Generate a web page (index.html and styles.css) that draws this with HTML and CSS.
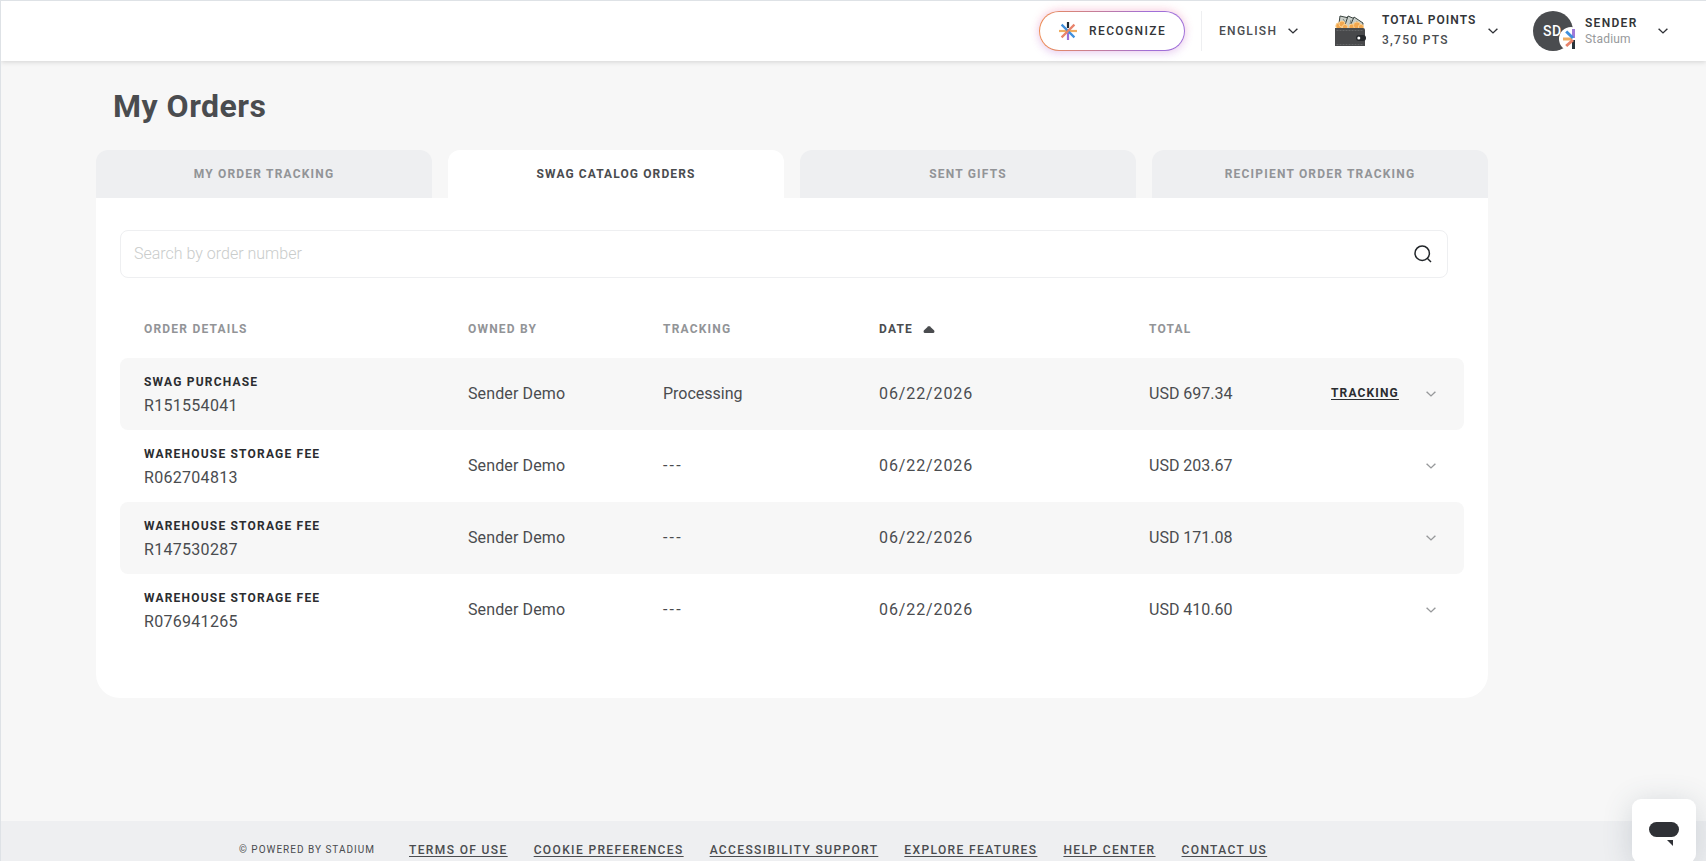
FILE: index.html
```html
<!DOCTYPE html>
<html lang="en">

<head>
    <meta charset="UTF-8">
    <meta name="viewport" content="width=device-width, initial-scale=1.0">
    <title>My Orders</title>
    <link rel="stylesheet" href="styles.css">
</head>

<body>
    <svg class="defs" width="0" height="0">
        <symbol id="chevron" viewBox="0 0 10 6">
            <path d="M0.6 0.7 L5 4.9 L9.4 0.7" fill="none" stroke="currentColor" stroke-width="1.4" />
        </symbol>
        <symbol id="spark" viewBox="0 0 18 18">
            <g fill="none" stroke-width="2.2">
                <path d="M0 9H18" stroke="#f0ad62" />
                <path d="M9 0V6" stroke="#212830" />
                <path d="M9 11V18" stroke="#9b6fd8" />
                <path d="M2.6 2.6L15.4 15.4" stroke="#3f8fdc" />
                <path d="M15.4 2.6L2.6 15.4" stroke="#e8836b" />
            </g>
        </symbol>
    </svg>

    <header class="topbar">
        <button class="recognize">
            <svg width="18" height="18"><use href="#spark" /></svg>
            <span>RECOGNIZE</span>
        </button>
        <div class="divider"></div>
        <div class="language">
            <span>ENGLISH</span>
            <svg class="chevron" width="10" height="6"><use href="#chevron" /></svg>
        </div>
        <div class="points">
            <svg width="31" height="32" viewBox="0 0 31 32">
                <g fill="#c9cec9" stroke="#39433f" stroke-width="1">
                    <path d="M5 1L14 3L12 16H3Z" />
                    <path d="M13 1L20 4L15 16H8Z" />
                    <path d="M19 2L28 8L27 16H13Z" />
                </g>
                <path d="M8 4L11 8M16 5L15 9M22 6L21 10" stroke="#7d8782" fill="none" />
                <g fill="#f2a74f" stroke="#fbd08f" stroke-width="1">
                    <circle cx="4" cy="11" r="3.2" />
                    <circle cx="7" cy="9" r="3" />
                    <circle cx="10" cy="12" r="2.6" />
                    <circle cx="17" cy="12" r="3" />
                    <circle cx="22" cy="10.5" r="3.6" />
                    <circle cx="26" cy="12" r="2.6" />
                </g>
                <path d="M0 13H28Q30 13 30 15V31H0Z" fill="#48494b" />
                <path d="M1.5 15.5H28M1.5 29.5H28" stroke="#77797b" stroke-width=".6" stroke-dasharray="2 1" />
                <rect x="21" y="20" width="10" height="6" rx="3" fill="#25282b" />
                <circle cx="23.8" cy="23" r="1.5" fill="#fff" />
            </svg>
            <div class="points-text">
                <div class="points-title">TOTAL POINTS</div>
                <div class="points-value">3,750 PTS</div>
            </div>
            <svg class="chevron" width="10" height="6"><use href="#chevron" /></svg>
        </div>
        <div class="user">
            <div class="avatar">
                <span>SD</span>
                <svg class="badge" width="16" height="24" viewBox="0 0 16 24">
                    <circle cx="12" cy="12" r="12" fill="#fff" />
                    <g fill="none" stroke-width="3">
                        <path d="M14.5 2V11" stroke="#a07ad8" />
                        <path d="M14.5 13V22" stroke="#26323a" />
                        <path d="M4 12H13" stroke="#f0ad62" />
                        <path d="M7.2 4.5L14 11" stroke="#3f8fdc" />
                        <path d="M7.2 19L14 13" stroke="#e8836b" />
                    </g>
                </svg>
            </div>
            <div class="user-text">
                <div class="user-name">SENDER</div>
                <div class="user-company">Stadium</div>
            </div>
            <svg class="chevron" width="10" height="6"><use href="#chevron" /></svg>
        </div>
    </header>

    <main class="page">
        <h1>My Orders</h1>

        <nav class="tabs">
            <a class="tab">MY ORDER TRACKING</a>
            <a class="tab active">SWAG CATALOG ORDERS</a>
            <a class="tab">SENT GIFTS</a>
            <a class="tab">RECIPIENT ORDER TRACKING</a>
        </nav>

        <section class="card">
            <div class="search">
                <input type="text" placeholder="Search by order number">
                <svg width="18" height="18" viewBox="0 0 18 18" fill="none" stroke="#212529" stroke-width="1.5">
                    <circle cx="8.2" cy="8.2" r="7.2" />
                    <path d="M13 13L17 17" />
                </svg>
            </div>

            <div class="orders">
                <div class="row head">
                    <div>ORDER DETAILS</div>
                    <div>OWNED BY</div>
                    <div>TRACKING</div>
                    <div class="sorted">DATE
                        <svg width="12" height="7" viewBox="0 0 12 7"><path d="M5 .4Q6 -.3 7 .4L11.2 4.6Q12 7 10 7H2Q0 7 .8 4.6Z" fill="#4a4c4f" /></svg>
                    </div>
                    <div>TOTAL</div>
                </div>
                <div class="row">
                    <div>
                        <div class="order-type">SWAG PURCHASE</div>
                        <div class="order-number">R151554041</div>
                    </div>
                    <div class="cell owner">Sender Demo</div>
                    <div class="cell">Processing</div>
                    <div class="cell date">06/22/2026</div>
                    <div class="cell">USD 697.34</div>
                    <a class="track-link">TRACKING</a>
                    <svg class="chevron" width="10" height="6"><use href="#chevron" /></svg>
                </div>
                <div class="row">
                    <div>
                        <div class="order-type">WAREHOUSE STORAGE FEE</div>
                        <div class="order-number">R062704813</div>
                    </div>
                    <div class="cell owner">Sender Demo</div>
                    <div class="cell none">---</div>
                    <div class="cell date">06/22/2026</div>
                    <div class="cell">USD 203.67</div>
                    <div></div>
                    <svg class="chevron" width="10" height="6"><use href="#chevron" /></svg>
                </div>
                <div class="row">
                    <div>
                        <div class="order-type">WAREHOUSE STORAGE FEE</div>
                        <div class="order-number">R147530287</div>
                    </div>
                    <div class="cell owner">Sender Demo</div>
                    <div class="cell none">---</div>
                    <div class="cell date">06/22/2026</div>
                    <div class="cell">USD 171.08</div>
                    <div></div>
                    <svg class="chevron" width="10" height="6"><use href="#chevron" /></svg>
                </div>
                <div class="row">
                    <div>
                        <div class="order-type">WAREHOUSE STORAGE FEE</div>
                        <div class="order-number">R076941265</div>
                    </div>
                    <div class="cell owner">Sender Demo</div>
                    <div class="cell none">---</div>
                    <div class="cell date">06/22/2026</div>
                    <div class="cell">USD 410.60</div>
                    <div></div>
                    <svg class="chevron" width="10" height="6"><use href="#chevron" /></svg>
                </div>
            </div>
        </section>
    </main>

    <footer class="footer">
        <span class="copyright">© POWERED BY STADIUM</span>
        <a>TERMS OF USE</a>
        <a>COOKIE PREFERENCES</a>
        <a>ACCESSIBILITY SUPPORT</a>
        <a>EXPLORE FEATURES</a>
        <a>HELP CENTER</a>
        <a>CONTACT US</a>
    </footer>

    <button class="chat">
        <svg width="30" height="25" viewBox="0 0 30 25" fill="#2f3136">
            <rect width="30" height="15" rx="7.5" />
            <path d="M18 18H24V24Z" />
        </svg>
    </button>
</body>

</html>
```
FILE: styles.css
```css
* {
    box-sizing: border-box;
}

body {
    margin: 0;
    height: 861px;
    overflow: hidden;
    display: flex;
    flex-direction: column;
    font-family: Roboto, sans-serif;
    font-size: 16px;
    color: #4a4c4f;
    background-color: #f7f7f7;
    border-left: 1px solid #dee2e6;
}

svg {
    display: block;
    flex: none;
}

.defs {
    position: absolute;
}

button {
    font-family: inherit;
    cursor: pointer;
}

.topbar {
    height: 61px;
    flex: none;
    display: flex;
    align-items: center;
    padding-left: 1038px;
    background-color: #fff;
    border-top: 1px solid #dee2e6;
    box-shadow: 0 1px 5px rgba(0, 0, 0, 0.15);
    font-size: 12px;
    font-weight: 500;
    letter-spacing: 1.3px;
    white-space: nowrap;
}

.recognize {
    width: 146px;
    height: 40px;
    display: flex;
    align-items: center;
    gap: 12px;
    padding: 0 0 0 19px;
    border: 1px solid transparent;
    border-radius: 20px;
    background: linear-gradient(#fff, #fff) padding-box, linear-gradient(90deg, #ee8d55, #a06fd8 75%) border-box;
    box-shadow: 0 -2px 9px rgba(255, 120, 150, 0.25), 0 3px 9px rgba(160, 100, 230, 0.22);
    color: #333538;
    font-size: 12px;
    font-weight: 500;
    letter-spacing: 1.4px;
}

.divider {
    width: 1px;
    height: 40px;
    margin: 0 17px 0 16px;
    background-color: #eeeff1;
}

.language {
    width: 116px;
    display: flex;
    align-items: center;
    justify-content: space-between;
    padding-right: 37px;
}

.language .chevron,
.points .chevron,
.user .chevron {
    color: #2f3136;
}

.points {
    width: 198px;
    display: flex;
    align-items: center;
}

.points-text {
    width: 106px;
    margin-left: 16px;
    padding-bottom: 2px;
    line-height: 20px;
}

.points-title {
    font-weight: 600;
    letter-spacing: 1.05px;
    color: #333538;
}

.user-name {
    font-weight: 600;
    color: #333538;
}

.user {
    display: flex;
    align-items: center;
}

.avatar {
    position: relative;
    width: 40px;
    height: 40px;
    display: flex;
    align-items: center;
    padding-left: 10px;
    border-radius: 50%;
    background-color: #4a4c4f;
    color: #fff;
    font-size: 14px;
    letter-spacing: 0.5px;
}

.badge {
    position: absolute;
    left: 26px;
    top: 16px;
}

.user-text {
    width: 73px;
    margin-left: 12px;
    line-height: 16px;
}

.user-company {
    color: #97999b;
    font-weight: 400;
    letter-spacing: 0.2px;
}

.page {
    width: 1392px;
    margin-left: 95px;
    flex: 1;
}

h1 {
    margin: 25px 0 24px 17px;
    font-size: 32px;
    line-height: 40px;
    font-weight: 700;
    letter-spacing: 0.5px;
}

.tabs {
    display: grid;
    grid-template-columns: repeat(4, 1fr);
    gap: 16px;
}

.tab {
    height: 48px;
    line-height: 48px;
    text-align: center;
    border-radius: 12px 12px 0 0;
    background-color: #eeeff1;
    color: #929497;
    font-size: 12px;
    font-weight: 700;
    letter-spacing: 1.2px;
}

.tab.active {
    background-color: #fff;
    color: #4a4c4f;
    letter-spacing: 1.1px;
}

.card {
    height: 500px;
    padding: 32px 24px 0;
    background-color: #fff;
    border-radius: 0 0 24px 24px;
}

.search {
    width: 1328px;
    height: 48px;
    display: flex;
    align-items: center;
    padding: 0 15px 0 13px;
    border: 1px solid #eeeff1;
    border-radius: 8px;
}

.search input {
    flex: 1;
    padding: 0 0 2px;
    border: 0;
    outline: 0;
    font: 300 16px Roboto, sans-serif;
}

.search input::placeholder {
    color: #c9cccb;
}

.row {
    height: 72px;
    display: grid;
    grid-template-columns: 324px 195px 216px 270px 182px 95px 10px;
    align-items: center;
    padding-left: 24px;
    border-radius: 8px;
}

.row:nth-child(even) {
    background-color: #f7f7f7;
}

.row .chevron {
    color: #97999b;
}

.row.head {
    height: 48px;
    margin-top: 27px;
    margin-bottom: 5px;
    font-size: 12px;
    font-weight: 700;
    letter-spacing: 1.2px;
    color: #929497;
}

.row .sorted {
    display: flex;
    align-items: center;
    gap: 10px;
    color: #4a4c4f;
}

.cell {
    padding-bottom: 2px;
}

.owner {
    letter-spacing: 0.12px;
}

.date {
    letter-spacing: 0.9px;
}

.none {
    letter-spacing: 2.2px;
}

.order-type {
    font-size: 12px;
    line-height: 24px;
    font-weight: 700;
    letter-spacing: 1.2px;
    color: #2b2d30;
}

.order-number {
    line-height: 24px;
    letter-spacing: 0.3px;
}

.track-link {
    padding-bottom: 2px;
    font-size: 12px;
    font-weight: 700;
    letter-spacing: 1.15px;
    text-decoration: underline;
    text-underline-offset: 2px;
    color: #2b2d30;
}

.footer {
    height: 40px;
    flex: none;
    display: flex;
    align-items: center;
    gap: 26px;
    padding: 17px 0 0 238px;
    background-color: #eeeff1;
    font-size: 12px;
    font-weight: 500;
    letter-spacing: 1.375px;
    white-space: nowrap;
}

.footer a {
    text-decoration: underline;
    text-underline-offset: 2px;
}

.copyright {
    width: 144px;
    font-size: 10px;
    font-weight: 400;
    letter-spacing: 1px;
}

/* support chat bubble */
.chat {
    position: fixed;
    left: 1632px;
    top: 799px;
    width: 64px;
    height: 64px;
    padding: 7px 0 0 17px;
    border: 0;
    border-radius: 9px;
    background-color: #fff;
    box-shadow: 0 4px 30px rgba(60, 80, 100, 0.2);
}
```
